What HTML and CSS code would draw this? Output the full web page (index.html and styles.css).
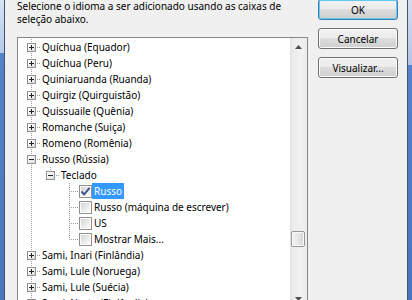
FILE: index.html
```html
<!DOCTYPE html>
<html lang="pt-BR">
<head>
    <meta charset="UTF-8">
    <title>Adicionar idioma de entrada</title>
    <link rel="stylesheet" href="styles.css">
</head>
<body>
    <div class="frame frame-left"></div>

    <div class="dialog">
        <div class="main">
            <p class="intro">Selecione o idioma a ser adicionado usando as caixas de<br>seleção abaixo.</p>

            <div class="tree">
                <ul class="nodes">
                    <li class="row"><span class="cell t-branch"><i class="box plus"></i></span><span class="label">Quíchua (Equador)</span></li>
                    <li class="row"><span class="cell t-branch"><i class="box plus"></i></span><span class="label">Quíchua (Peru)</span></li>
                    <li class="row"><span class="cell t-branch"><i class="box plus"></i></span><span class="label">Quiniaruanda (Ruanda)</span></li>
                    <li class="row"><span class="cell t-branch"><i class="box plus"></i></span><span class="label">Quirgiz (Quirguistão)</span></li>
                    <li class="row"><span class="cell t-branch"><i class="box plus"></i></span><span class="label">Quissuaile (Quênia)</span></li>
                    <li class="row"><span class="cell t-branch"><i class="box plus"></i></span><span class="label">Romanche (Suiça)</span></li>
                    <li class="row"><span class="cell t-branch"><i class="box plus"></i></span><span class="label">Romeno (Romênia)</span></li>
                    <li class="row"><span class="cell t-branch"><i class="box minus"></i></span><span class="label">Russo (Rússia)</span></li>

                    <!-- Teclado e layouts -->
                    <li class="row"><span class="cell t-pass"></span><span class="cell t-last"><i class="box minus"></i></span><span class="label">Teclado</span></li>
                    <li class="row">
                        <span class="cell t-pass"></span><span class="cell"></span><span class="cell t-branch"></span>
                        <span class="check checked"><svg width="11" height="11" viewBox="0 0 11 11"><path d="M1.5 5.5 L4.2 8.3 L9.6 1.8" fill="none" stroke="#3d5286" stroke-width="1.9"/></svg></span>
                        <span class="label sel">Russo</span>
                    </li>
                    <li class="row">
                        <span class="cell t-pass"></span><span class="cell"></span><span class="cell t-branch"></span>
                        <span class="check"></span>
                        <span class="label">Russo (máquina de escrever)</span>
                    </li>
                    <li class="row">
                        <span class="cell t-pass"></span><span class="cell"></span><span class="cell t-branch"></span>
                        <span class="check"></span>
                        <span class="label">US</span>
                    </li>
                    <li class="row">
                        <span class="cell t-pass"></span><span class="cell"></span><span class="cell t-last"></span>
                        <span class="check"></span>
                        <span class="label">Mostrar Mais...</span>
                    </li>

                    <li class="row"><span class="cell t-branch"><i class="box plus"></i></span><span class="label">Sami, Inari (Finlândia)</span></li>
                    <li class="row"><span class="cell t-branch"><i class="box plus"></i></span><span class="label">Sami, Lule (Noruega)</span></li>
                    <li class="row"><span class="cell t-branch"><i class="box plus"></i></span><span class="label">Sami, Lule (Suécia)</span></li>
                    <li class="row"><span class="cell t-branch"><i class="box plus"></i></span><span class="label">Sami, Norte (Finlândia)</span></li>
                    <li class="row"><span class="cell t-branch"><i class="box plus"></i></span><span class="label">Sami, Norte (Noruega)</span></li>
                </ul>

                <div class="vscroll">
                    <div class="sb-btn">
                        <svg width="7" height="4" viewBox="0 0 7 4"><path d="M0 4 L3.5 0 L7 4 Z" fill="#4f4f4f"/></svg>
                    </div>
                    <div class="sb-track">
                        <div class="sb-thumb"></div>
                    </div>
                    <div class="sb-btn">
                        <svg width="7" height="4" viewBox="0 0 7 4"><path d="M0 0 L3.5 4 L7 0 Z" fill="#4f4f4f"/></svg>
                    </div>
                </div>
            </div>
        </div>

        <div class="buttons">
            <button class="btn default">OK</button>
            <button class="btn">Cancelar</button>
            <button class="btn">Visualizar...</button>
        </div>
    </div>

    <div class="frame frame-right"></div>
</body>
</html>
```

FILE: styles.css
```css
html,
body {
    margin: 0;
    padding: 0;
    height: 300px;
    overflow: hidden;
}

body {
    display: flex;
    width: 412px;
    background-color: #f0f0f0;
    font-family: "Noto Sans", "Open Sans", sans-serif;
    font-size: 10px;
    color: #000;
}

/* moldura da janela */
.frame {
    flex: none;
    width: 4px;
}

.frame-left {
    border-right: 1px solid #3e5274;
    background: linear-gradient(#d7e4f3 0, #b4cae6 53px, #5282c7 53px, #4676bd 100%);
}

.frame-right {
    border-left: 1px solid #4c5568;
    background: linear-gradient(#d2dfef 0, #b0c6e2 65px, #5282c7 65px, #4676bd 100%);
}

.dialog {
    flex: 1;
    display: flex;
    padding-left: 12px;
}

.main {
    flex: none;
    width: 291px;
}

.intro {
    margin: 0 0 11px;
    line-height: 13px;
}

/* árvore */
.tree {
    display: flex;
    height: 271px;
    box-sizing: border-box;
    border: 1px solid #828790;
    background-color: #fff;
}

.nodes {
    flex: 1;
    margin: 0;
    padding: 1px 0 0 3px;
    list-style: none;
    overflow: hidden;
}

.row {
    display: flex;
    align-items: flex-start;
    height: 16px;
    white-space: nowrap;
}

.cell {
    flex: none;
    width: 19px;
    height: 16px;
    background-repeat: no-repeat;
}

.t-pass {
    background-image: repeating-linear-gradient(to bottom, #a0a0a0 0 1px, transparent 1px 2px);
    background-size: 1px 16px;
    background-position: 10px 0;
}

.t-branch {
    background-image:
        repeating-linear-gradient(to bottom, #a0a0a0 0 1px, transparent 1px 2px),
        repeating-linear-gradient(to right, #a0a0a0 0 1px, transparent 1px 2px);
    background-size: 1px 16px, 9px 1px;
    background-position: 10px 0, 10px 8px;
}

.t-last {
    background-image:
        repeating-linear-gradient(to bottom, #a0a0a0 0 1px, transparent 1px 2px),
        repeating-linear-gradient(to right, #a0a0a0 0 1px, transparent 1px 2px);
    background-size: 1px 9px, 9px 1px;
    background-position: 10px 0, 10px 8px;
}

.box {
    display: block;
    width: 9px;
    height: 9px;
    box-sizing: border-box;
    margin: 4px 0 0 6px;
    border: 1px solid #919191;
    background-repeat: no-repeat;
}

.box.plus {
    background-image:
        linear-gradient(#262626, #262626),
        linear-gradient(#262626, #262626),
        linear-gradient(135deg, #ffffff, #dedede);
    background-size: 5px 1px, 1px 5px, 100% 100%;
    background-position: 1px 3px, 3px 1px, 0 0;
}

.box.minus {
    background-image:
        linear-gradient(#262626, #262626),
        linear-gradient(135deg, #ffffff, #dedede);
    background-size: 5px 1px, 100% 100%;
    background-position: 1px 3px, 0 0;
}

.check {
    flex: none;
    display: flex;
    align-items: center;
    justify-content: center;
    width: 13px;
    height: 13px;
    box-sizing: border-box;
    margin: 2px 0 0 1px;
    border: 1px solid #8e8f8f;
    background: linear-gradient(135deg, #d0d0d0 0%, #eeeeee 60%, #fbfbfb 100%);
    box-shadow: inset 0 0 0 1px #fdfdfd;
}

.label {
    height: 16px;
    padding: 0 2px;
    line-height: 16px;
}

.label.sel {
    background-color: #3399ff;
    color: #fff;
}

/* barra de rolagem */
.vscroll {
    flex: none;
    display: flex;
    flex-direction: column;
    width: 17px;
    background: linear-gradient(to right, #e2e2e2 0, #ececec 3px, #f0f0f0 60%, #ededed 100%);
}

.sb-btn {
    flex: none;
    display: flex;
    align-items: center;
    justify-content: center;
    height: 17px;
}

.sb-track {
    flex: 1;
}

.sb-thumb {
    height: 16px;
    box-sizing: border-box;
    margin: 176px 2px 0 1px;
    border: 1px solid #979797;
    border-radius: 2px;
    background: linear-gradient(to right, #f4f4f4, #e6e6e6 50%, #d5d5d5);
    box-shadow: inset 0 0 0 1px #fbfbfb;
}

/* botões */
.buttons {
    flex: none;
    display: flex;
    flex-direction: column;
    gap: 8px;
    margin: -1px 0 0 10px;
}

.btn {
    width: 80px;
    height: 21px;
    padding: 0;
    border: 1px solid #707070;
    border-radius: 3px;
    font-family: inherit;
    font-size: 10px;
    color: #000;
    background: linear-gradient(#f2f2f2 0%, #ebebeb 50%, #dddddd 50%, #cfcfcf 100%);
    box-shadow: inset 0 0 0 1px #fbfbfb;
}

.btn.default {
    border-color: #3c7fb1;
    box-shadow: inset 0 0 0 1px #62c8f3;
}
```
